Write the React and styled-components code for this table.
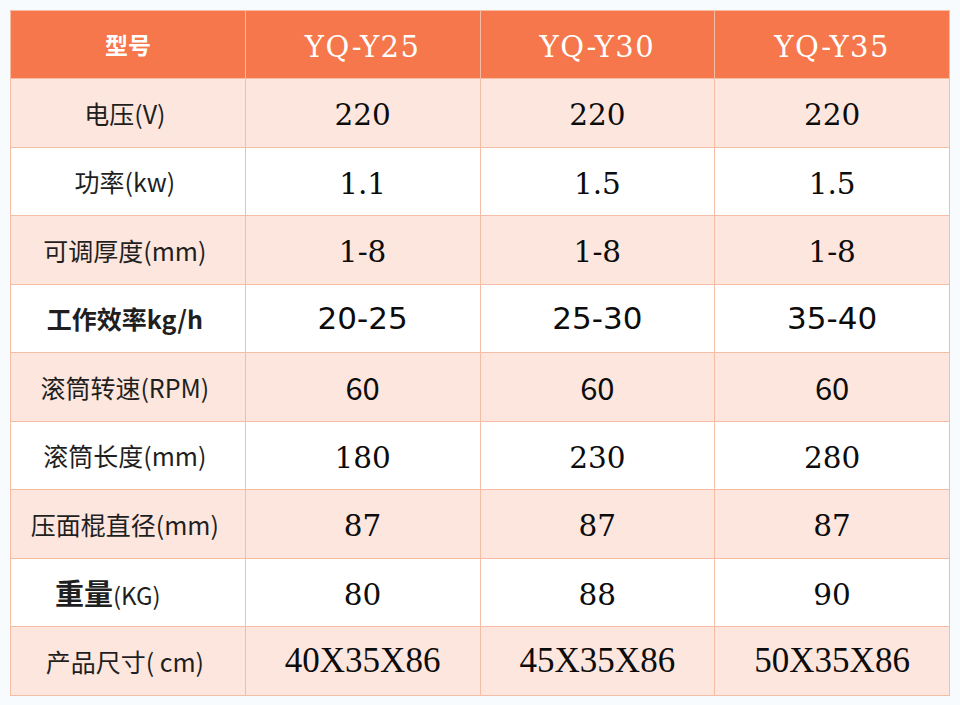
import styled, { createGlobalStyle } from "styled-components";

const GlobalStyle = createGlobalStyle`
  html, body {
    margin: 0;
    padding: 0;
    background: #f8fbfe;
  }
`;

const fonts = {
  serif: `"DejaVu Serif", serif`,
  sans: `"DejaVu Sans", sans-serif`,
  narrow: `"Noto Sans CJK SC", "Noto Sans", sans-serif`,
  song: `"Liberation Serif", serif`,
  label: `"Noto Sans CJK SC", "Noto Sans", sans-serif`,
};

const sizes = { serif: "29.5px", sans: "31px", narrow: "31px", song: "35px" };

const models = ["YQ-Y25", "YQ-Y30", "YQ-Y35"];

const rows = [
  { label: "电压(V)", values: ["220", "220", "220"], font: "serif" },
  { label: "功率(kw)", values: ["1.1", "1.5", "1.5"], font: "serif" },
  { label: "可调厚度(mm)", values: ["1-8", "1-8", "1-8"], font: "serif" },
  { label: "工作效率kg/h", values: ["20-25", "25-30", "35-40"], font: "sans", bold: true },
  { label: "滚筒转速(RPM)", values: ["60", "60", "60"], font: "narrow" },
  { label: "滚筒长度(mm)", values: ["180", "230", "280"], font: "serif" },
  { label: "压面棍直径(mm)", values: ["87", "87", "87"], font: "serif" },
  { label: "重量", unit: "(KG)", values: ["80", "88", "90"], font: "serif", big: true },
  { label: "产品尺寸( cm)", values: ["40X35X86", "45X35X86", "50X35X86"], font: "song" },
];

export default function App() {
  return (
    <>
      <GlobalStyle />
      <Page>
        <Table>
          <thead>
            <HeadRow>
              <HeadLabel>型号</HeadLabel>
              {models.map((m) => (
                <HeadModel key={m}>{m}</HeadModel>
              ))}
            </HeadRow>
          </thead>
          <tbody>
            {rows.map((r, i) => (
              <Row key={r.label} $tint={i % 2 === 0}>
                <Label $bold={r.bold} $shift={r.big}>
                  {r.big ? (
                    <>
                      <BigLabel>{r.label}</BigLabel>
                      <Unit>{r.unit}</Unit>
                    </>
                  ) : (
                    r.label
                  )}
                </Label>
                {r.values.map((v, j) => (
                  <Value key={j} $font={r.font}>
                    {v}
                  </Value>
                ))}
              </Row>
            ))}
          </tbody>
        </Table>
      </Page>
    </>
  );
}

const Page = styled.div`
  padding: 10px;
  box-sizing: border-box;
  width: 960px;
`;

const Table = styled.table`
  width: 940px;
  table-layout: fixed;
  border-collapse: collapse;
  border: 1px solid #f6bda6;
`;

const HeadRow = styled.tr`
  height: 68px;
  background: #f5774b;
`;

const HeadLabel = styled.th`
  border: 1px solid #f6bda6;
  border-top: none;
  color: #fff;
  font-family: ${fonts.label};
  font-size: 23px;
  font-weight: 700;
  padding: 0;
  padding-bottom: 2px;
`;

const HeadModel = styled.th`
  border: 1px solid #f6bda6;
  border-top: none;
  color: #fff;
  font-family: ${fonts.serif};
  font-size: 29px;
  font-weight: 400;
  letter-spacing: 1.5px;
  padding: 4px 0 0;
`;

const Row = styled.tr`
  height: 68.5px;
  background: ${(p) => (p.$tint ? "#fde6de" : "#ffffff")};
`;

const Label = styled.td`
  border: 1px solid #f6bda6;
  text-align: center;
  color: #1f1f1f;
  font-family: ${fonts.label};
  font-size: 25px;
  font-weight: ${(p) => (p.$bold ? 700 : 400)};
  padding: 0 ${(p) => (p.$shift ? "40px" : "6px")} 0 0;
`;

const BigLabel = styled.span`
  font-size: 29px;
  font-weight: 700;
`;

const Unit = styled.span`
  font-size: 24px;
`;

const Value = styled.td`
  border: 1px solid #f6bda6;
  text-align: center;
  color: #0c0c0c;
  font-family: ${(p) => fonts[p.$font]};
  font-size: ${(p) => sizes[p.$font]};
  padding: 0;
  padding-top: ${(p) => (p.$font === "serif" ? "5px" : "0")};
`;
